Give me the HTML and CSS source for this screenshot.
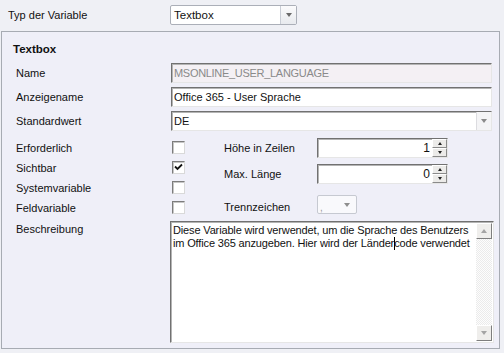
FILE: index.html
```html
<!DOCTYPE html>
<html lang="de">
<head>
  <meta charset="UTF-8">
  <title>Variable bearbeiten</title>
  <link rel="stylesheet" href="styles.css">
</head>
<body>
  <div class="top-row">
    <span class="top-label">Typ der Variable</span>
    <div class="combo-top">
      <span class="combo-text">Textbox</span>
      <span class="combo-top-btn"><i class="arrow"></i></span>
    </div>
  </div>

  <div class="panel">
    <div class="panel-title">Textbox</div>
    <div class="form">
      <div class="row">
        <span class="label">Name</span>
        <div class="field disabled">MSONLINE_USER_LANGUAGE</div>
      </div>
      <div class="row">
        <span class="label">Anzeigename</span>
        <div class="field">Office 365 - User Sprache</div>
      </div>
      <div class="row">
        <span class="label">Standardwert</span>
        <div class="field combo">
          <span class="combo-text">DE</span>
          <span class="combo-btn"><i class="arrow"></i></span>
        </div>
      </div>

      <div class="checks">
        <div class="check-grid">
          <span class="label">Erforderlich</span>
          <span class="checkbox"></span>
          <span class="label">Sichtbar</span>
          <span class="checkbox">
            <svg width="9" height="9" viewBox="0 0 9 9"><path d="M1 3.5 L3.5 6 L8 1.5" fill="none" stroke="#111" stroke-width="1.8"/></svg>
          </span>
          <span class="label">Systemvariable</span>
          <span class="checkbox"></span>
          <span class="label">Feldvariable</span>
          <span class="checkbox"></span>
        </div>

        <div class="side">
          <div class="side-row">
            <span class="label side-label">Höhe in Zeilen</span>
            <div class="field spinner">
              <span class="spin-value">1</span>
              <span class="spin-btns">
                <span class="spin-btn"><i class="tri-up"></i></span>
                <span class="spin-btn"><i class="tri-down"></i></span>
              </span>
            </div>
          </div>
          <div class="side-row">
            <span class="label side-label">Max. Länge</span>
            <div class="field spinner">
              <span class="spin-value">0</span>
              <span class="spin-btns">
                <span class="spin-btn"><i class="tri-up"></i></span>
                <span class="spin-btn"><i class="tri-down"></i></span>
              </span>
            </div>
          </div>
          <div class="side-row sep-row">
            <span class="label side-label">Trennzeichen</span>
            <div class="combo-small">
              <span class="sep-value">,</span>
              <i class="arrow"></i>
            </div>
          </div>
        </div>
      </div>

      <div class="row desc-row">
        <span class="label">Beschreibung</span>
        <div class="field memo">
          <div class="memo-text">Diese Variable wird verwendet, um die Sprache des Benutzers<br>im Office 365 anzugeben. Hier wird der Länder<span class="caret"></span>code verwendet</div>
          <div class="scrollbar">
            <span class="scroll-btn"><i class="tri-up grey"></i></span>
            <span class="scroll-track"></span>
            <span class="scroll-btn"><i class="tri-down grey"></i></span>
          </div>
        </div>
      </div>
    </div>
  </div>
</body>
</html>
```

FILE: styles.css
```css
:root {
  --page-bg: #eff0f5;
  --panel-bg: #efeff8;
  --panel-border: #a7abb3;
  --sunken-dark: #717171;
  --sunken-light: #e6e6e6;
  --text: #111;
}

* {
  box-sizing: border-box;
}

body {
  margin: 0;
  width: 504px;
  height: 353px;
  overflow: hidden;
  background: var(--page-bg);
  color: var(--text);
  font-family: "Liberation Sans", Arial, sans-serif;
  font-size: 11px;
}

/* Top selector */
.top-row {
  display: flex;
  align-items: center;
  height: 20px;
  margin-top: 5px;
  padding-left: 8px;
}

.top-label {
  width: 162px;
}

.combo-top {
  display: flex;
  width: 127px;
  height: 20px;
  background: #fff;
  border: 1px solid #abafb8;
  border-radius: 2px;
}

.combo-top .combo-text {
  flex: 1;
  padding-left: 3px;
  line-height: 18px;
  font-size: 11.5px;
}

.combo-top-btn {
  width: 16px;
  display: flex;
  align-items: center;
  justify-content: center;
  border-left: 1px solid #c9cdd5;
  background: linear-gradient(#fbfbfc, #e8eaee);
}

.arrow {
  width: 0;
  height: 0;
  border-left: 3.5px solid transparent;
  border-right: 3.5px solid transparent;
  border-top: 4px solid #6a6a6a;
}

/* Panel */
.panel {
  margin: 6px 0 0 1px;
  width: 499px;
  height: 318px;
  background: var(--panel-bg);
  border: 1px solid var(--panel-border);
}

.panel-title {
  font-weight: bold;
  font-size: 11.5px;
  line-height: 14px;
  padding: 10px 0 0 11px;
  margin-bottom: 7px;
}

.form {
  padding: 0 7px 0 14px;
}

.row {
  display: grid;
  grid-template-columns: 155px 1fr;
  align-items: center;
  height: 20px;
  margin-bottom: 4px;
}

.label {
  line-height: 13px;
  white-space: nowrap;
}

/* Sunken fields */
.field {
  height: 20px;
  background: #fff;
  border: 1px solid;
  border-color: var(--sunken-dark) var(--sunken-light) var(--sunken-light) var(--sunken-dark);
  box-shadow: inset 1px 1px 0 #b4b4b4;
  padding-left: 2px;
  line-height: 18px;
  font-size: 11px;
  white-space: nowrap;
  overflow: hidden;
}

.field.disabled {
  background: #f4f0f4;
  color: #8a8a8a;
  letter-spacing: -0.3px;
}

.combo {
  display: flex;
  padding-left: 0;
}

.combo .combo-text {
  flex: 1;
  padding-left: 2px;
}

.combo-btn {
  width: 15px;
  display: flex;
  align-items: center;
  justify-content: center;
  background: #f4f4f6;
  border-left: 1px solid #dcdce0;
}

.combo-btn .arrow {
  border-top-color: #8a8a8a;
}

/* Checkbox block */
.checks {
  display: flex;
  margin-top: 7px;
  height: 83px;
}

.check-grid {
  display: grid;
  grid-template-columns: 156px 52px;
  grid-auto-rows: 20px;
  padding-top: 3px;
}

.checkbox {
  width: 13px;
  height: 13px;
  background: #fff;
  border: 1px solid;
  border-color: #7c7c7c #d9d9d9 #d9d9d9 #7c7c7c;
  box-shadow: inset 1px 1px 0 #c6c6c6;
  display: flex;
  align-items: center;
  justify-content: center;
}

.check-grid .label {
  padding-top: 1px;
}

.side {
  display: flex;
  flex-direction: column;
  gap: 6px;
}

.side-row {
  display: flex;
  align-items: center;
  height: 20px;
}

.side-label {
  width: 93px;
}

.spinner {
  width: 131px;
  display: flex;
  justify-content: flex-end;
  padding: 0;
}

.spin-value {
  padding-right: 2px;
  font-size: 12px;
}

.spin-btns {
  width: 15px;
  display: flex;
  flex-direction: column;
}

.spin-btn {
  flex: 1;
  display: flex;
  align-items: center;
  justify-content: center;
  background: #ecebe9;
  border: 1px solid;
  border-color: #fff #8a8a8a #8a8a8a #fff;
}

.tri-up,
.tri-down {
  width: 0;
  height: 0;
  border-left: 2.5px solid transparent;
  border-right: 2.5px solid transparent;
}

.tri-up {
  border-bottom: 3px solid #222;
}

.tri-down {
  border-top: 3px solid #222;
}

.tri-up.grey {
  border-bottom-color: #a4a4a4;
  border-left-width: 3.5px;
  border-right-width: 3.5px;
  border-bottom-width: 4px;
}

.tri-down.grey {
  border-top-color: #a4a4a4;
  border-left-width: 3.5px;
  border-right-width: 3.5px;
  border-top-width: 4px;
}

.sep-row {
  margin-top: 5px;
  height: 19px;
}

.sep-row .side-label {
  padding-top: 6px;
}

.combo-small {
  width: 40px;
  height: 19px;
  display: flex;
  align-items: center;
  justify-content: space-between;
  padding: 0 6px 0 2px;
  background: #f9f9fc;
  border: 1px solid #c6c9d1;
  border-radius: 2px;
}

.sep-value {
  color: #9a9a9a;
  font-size: 10px;
  line-height: 10px;
  padding-top: 6px;
}

.combo-small .arrow {
  border-top-color: #8e8e8e;
}

/* Description */
.desc-row {
  align-items: start;
  height: 122px;
}

.desc-row .label {
  padding-top: 2px;
}

.memo {
  height: 122px;
  margin: 0 -2px 0 -1px;
  display: flex;
  padding: 1px 1px 1px 2px;
  white-space: nowrap;
  line-height: 13px;
}

.memo-text {
  flex: 1;
  min-width: 0;
  padding-top: 1px;
  letter-spacing: -0.15px;
}

.caret {
  display: inline-block;
  width: 1px;
  height: 13px;
  margin-right: -1px;
  background: #000;
  vertical-align: -3px;
}

.scrollbar {
  width: 16px;
  display: flex;
  flex-direction: column;
}

.scroll-btn {
  height: 16px;
  display: flex;
  align-items: center;
  justify-content: center;
  background: #efeeec;
  border: 1px solid;
  border-color: #fff #7e7e7e #7e7e7e #fff;
}

.scroll-track {
  flex: 1;
  background: repeating-conic-gradient(#ebebeb 0 25%, #fdfdfd 0 50%) 0 0 / 2px 2px;
}
```
